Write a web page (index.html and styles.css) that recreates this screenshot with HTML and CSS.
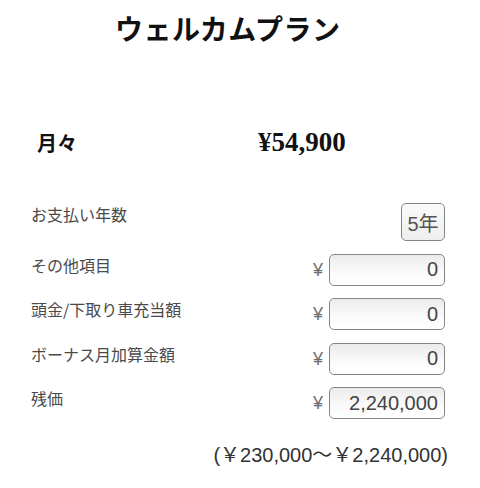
FILE: index.html
```html
<!DOCTYPE html>
<html lang="ja">
<head>
<meta charset="utf-8">
<title>ウェルカムプラン</title>
<link rel="stylesheet" href="styles.css">
</head>
<body>
<div class="page">
  <h1 class="title">ウェルカムプラン</h1>
  <div class="monthly">
    <span class="monthly-label">月々</span>
    <span class="monthly-value">¥54,900</span>
  </div>
  <div class="form">
    <div class="row">
      <span class="label">お支払い年数</span>
      <div class="field">
        <span class="years">5年</span>
      </div>
    </div>
    <div class="row">
      <span class="label">その他項目</span>
      <div class="field">
        <span class="yen">¥</span>
        <input class="amount" type="text" value="0">
      </div>
    </div>
    <div class="row">
      <span class="label">頭金/下取り車充当額</span>
      <div class="field">
        <span class="yen">¥</span>
        <input class="amount" type="text" value="0">
      </div>
    </div>
    <div class="row">
      <span class="label">ボーナス月加算金額</span>
      <div class="field">
        <span class="yen">¥</span>
        <input class="amount" type="text" value="0">
      </div>
    </div>
    <div class="row">
      <span class="label">残価</span>
      <div class="field">
        <span class="yen">¥</span>
        <input class="amount" type="text" value="2,240,000">
      </div>
    </div>
    <div class="range">(￥230,000〜￥2,240,000)</div>
  </div>
</div>
</body>
</html>
```
FILE: styles.css
```css
html, body {
  margin: 0;
  padding: 0;
  background: #ffffff;
}

body {
  font-family: "Liberation Sans", "Noto Sans CJK JP", sans-serif;
  color: #222;
}

.page {
  width: 480px;
  height: 488px;
  overflow: hidden;
}

.title {
  margin: 0;
  padding: 13px 0 0 115px;
  font-family: "Noto Sans CJK JP", sans-serif;
  font-size: 28px;
  font-weight: 700;
  line-height: 30px;
  color: #111;
  letter-spacing: 0.5px;
}

.monthly {
  display: flex;
  align-items: baseline;
  margin-top: 84px;
  padding-left: 37px;
}

.monthly-label {
  width: 221px;
  font-family: "Liberation Serif", "Noto Sans CJK JP", serif;
  font-size: 20px;
  font-weight: 700;
  color: #111;
}

.monthly-value {
  font-family: "Liberation Serif", serif;
  font-size: 27px;
  font-weight: 700;
  color: #111;
}

.form {
  display: flex;
  flex-direction: column;
  gap: 12.5px;
  margin-top: 45px;
  padding: 0 35px 0 31px;
}

.row {
  display: flex;
  justify-content: space-between;
  align-items: flex-start;
}

.label {
  font-family: "Noto Sans CJK JP", sans-serif;
  font-size: 16px;
  line-height: 20px;
  margin-top: 1px;
  color: #4a4a4a;
}

.field {
  display: flex;
  align-items: center;
  gap: 6px;
}

.yen {
  font-family: "Liberation Sans", sans-serif;
  font-size: 18px;
  color: #707070;
  margin-top: 1px;
}

.years {
  box-sizing: border-box;
  width: 44px;
  height: 38px;
  display: flex;
  align-items: center;
  justify-content: center;
  border: 1.5px solid #858585;
  border-radius: 5px;
  background: linear-gradient(#fafafa, #eeeeee);
  font-family: "Liberation Sans", "Noto Sans CJK JP", sans-serif;
  font-size: 20px;
  color: #555;
}

.amount {
  box-sizing: border-box;
  width: 116px;
  height: 32px;
  margin: 0;
  padding: 0 6px 0 4px;
  border: 1.5px solid #858585;
  border-radius: 5px;
  background: linear-gradient(#ebebeb, #fbfbfb 60%, #ffffff);
  font-family: "Liberation Sans", sans-serif;
  font-size: 20px;
  color: #444;
  text-align: right;
  outline: none;
}

.range {
  margin-top: 11px;
  margin-right: -3px;
  text-align: right;
  font-family: "Liberation Sans", "Noto Sans CJK JP", sans-serif;
  font-size: 20px;
  line-height: 24px;
  color: #333;
}
```
